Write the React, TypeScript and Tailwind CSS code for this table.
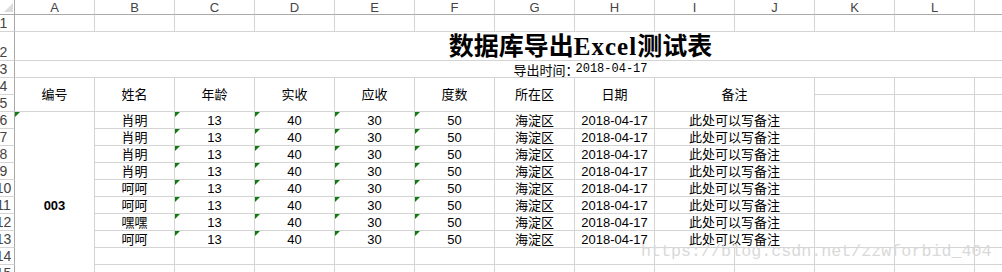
import React from "react";

const cols = ["A", "B", "C", "D", "E", "F", "G", "H", "I", "J", "K", "L"];
const heads = ["姓名", "年龄", "实收", "应收", "度数", "所在区", "日期"];
const names = ["肖明", "肖明", "肖明", "肖明", "呵呵", "呵呵", "嘿嘿", "呵呵"];

const grid = "border-r border-b border-[#d4d4d4]";
const cellFont = { fontFamily: '"Liberation Sans", "Noto Sans CJK SC", sans-serif' };

function Tri() {
  return (
    <span className="absolute top-0 left-0 w-0 h-0 border-t-[5px] border-t-[#107c10] border-r-[5px] border-r-transparent" />
  );
}

function Cell({
  children,
  className = "",
  tri = false,
}: {
  children?: React.ReactNode;
  className?: string;
  tri?: boolean;
}) {
  return (
    <div className={`relative flex items-center justify-center text-[13px] text-black leading-none ${grid} ${className}`}>
      {tri && <Tri />}
      {children}
    </div>
  );
}

function RowNum({ n }: { n: number }) {
  return (
    <div className="overflow-hidden flex items-end border-r border-r-[#a9a9a9] border-b border-b-[#d4d4d4]">
      <div className="w-[24px] ml-[-8.5px] shrink-0 text-center text-[14px] leading-[16px] text-[#444]">{n}</div>
    </div>
  );
}

export default function App() {
  const dataRows = names.map((name, i) => {
    const r = i + 6;
    return (
      <React.Fragment key={r}>
        <RowNum n={r} />
        {r === 6 && (
          <Cell className="row-span-11 font-bold" tri>
            003
          </Cell>
        )}
        <Cell>{name}</Cell>
        <Cell tri>13</Cell>
        <Cell tri>40</Cell>
        <Cell tri>30</Cell>
        <Cell tri>50</Cell>
        <Cell>海淀区</Cell>
        <Cell>2018-04-17</Cell>
        <Cell className="col-span-2">此处可以写备注</Cell>
        <Cell />
        <Cell />
        <Cell />
      </React.Fragment>
    );
  });

  const emptyRows = [14, 15, 16].map((r) => (
    <React.Fragment key={r}>
      <RowNum n={r} />
      {Array.from({ length: 12 }).map((_, j) => (
        <Cell key={j} />
      ))}
    </React.Fragment>
  ));

  return (
    <div className="relative w-[1002px] h-[272px] overflow-hidden bg-white" style={cellFont}>
      <div className="grid w-[1015px] grid-cols-[15px_repeat(12,80px)_40px] grid-rows-[15px_17px_29px_17px_17px_17px_repeat(11,17px)]">
        {/* column header */}
        <div className="flex items-end justify-end pr-[1px] pb-[2px] border-r border-r-[#a9a9a9] border-b border-b-[#a9a9a9]">
          <div className="w-0 h-0 border-l-[9px] border-l-transparent border-b-[9px] border-b-[#dcdcdc]" />
        </div>
        {cols.map((c) => (
          <div
            key={c}
            className="flex items-start justify-center pt-[1px] text-[13px] leading-none text-[#444] border-r border-r-[#d4d4d4] border-b border-b-[#a9a9a9]"
          >
            {c}
          </div>
        ))}
        <div className="border-r border-r-[#d4d4d4] border-b border-b-[#a9a9a9]" />

        {/* row 1 */}
        <RowNum n={1} />
        {Array.from({ length: 13 }).map((_, j) => (
          <Cell key={j} />
        ))}

        {/* row 2 title */}
        <RowNum n={2} />
        <div className="col-span-13 flex items-center justify-center pl-[131px] border-b border-[#d4d4d4]">
          <span
            className="text-[25px] font-bold text-black leading-none"
            style={{ fontFamily: '"Liberation Serif", "Noto Sans CJK SC", serif' }}
          >
            数据库导出<span className="tracking-[1px]">Excel</span>测试表
          </span>
        </div>

        {/* row 3 subtitle */}
        <RowNum n={3} />
        <div className="col-span-13 flex items-center justify-center pl-[131px] border-b border-[#d4d4d4] text-[13px] leading-none text-black">
          <span style={{ fontFamily: '"Noto Sans CJK SC", sans-serif' }}>导出时间：</span>
          <span className="text-[12px] -ml-[3px]" style={{ fontFamily: '"Liberation Mono", monospace' }}>
            2018-04-17
          </span>
        </div>

        {/* rows 4-5 headers */}
        <RowNum n={4} />
        <Cell className="row-span-2">编号</Cell>
        {heads.map((h) => (
          <Cell key={h} className="row-span-2">
            {h}
          </Cell>
        ))}
        <Cell className="row-span-2 col-span-2">备注</Cell>
        <Cell />
        <Cell />
        <Cell />
        <RowNum n={5} />
        <Cell />
        <Cell />
        <Cell />

        {dataRows}
        {emptyRows}
      </div>

      <div
        className="absolute left-[641px] top-[243px] text-[16.7px] leading-[18px] text-[#d9d9d9] whitespace-nowrap"
        style={{ fontFamily: '"Liberation Mono", monospace' }}
      >
        https://blog.csdn.net/zzwforbid_404
      </div>
    </div>
  );
}
